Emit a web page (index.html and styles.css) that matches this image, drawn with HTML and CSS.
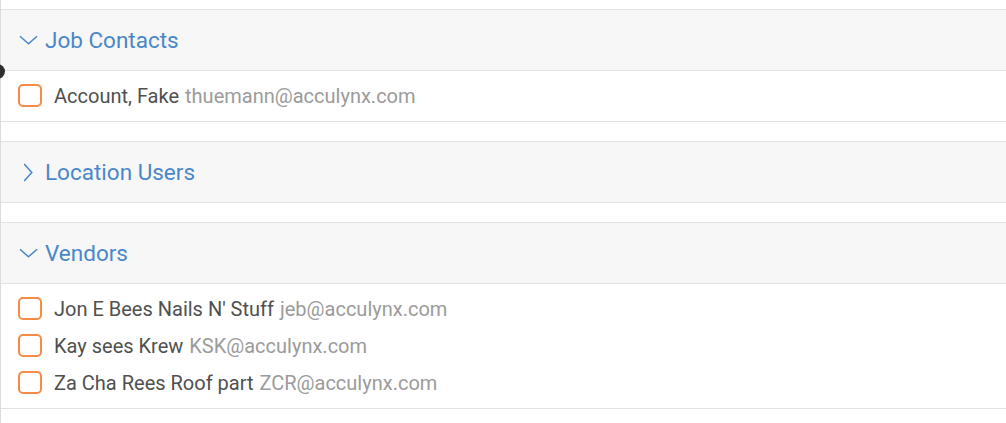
FILE: index.html
```html
<!DOCTYPE html>
<html lang="en">
<head>
    <meta charset="UTF-8">
    <title>Recipients</title>
    <link rel="stylesheet" href="styles.css">
</head>
<body>
    <div class="panel">
        <span class="handle"></span>

        <section class="group">
            <div class="group-header">
                <svg class="chevron" viewBox="0 0 20 10"><path d="M1 1 L10 9 L19 1"/></svg>
                <span class="group-title">Job Contacts</span>
            </div>
            <div class="group-body">
                <label class="contact">
                    <span class="check"></span>
                    <span class="contact-name">Account, Fake</span>
                    <span class="contact-email">thuemann@acculynx.com</span>
                </label>
            </div>
        </section>

        <section class="group">
            <div class="group-header">
                <svg class="chevron chevron-right" viewBox="0 0 10 20"><path d="M1 1 L9 10 L1 19"/></svg>
                <span class="group-title">Location Users</span>
            </div>
        </section>

        <section class="group">
            <div class="group-header">
                <svg class="chevron" viewBox="0 0 20 10"><path d="M1 1 L10 9 L19 1"/></svg>
                <span class="group-title">Vendors</span>
            </div>
            <div class="group-body">
                <label class="contact">
                    <span class="check"></span>
                    <span class="contact-name">Jon E Bees Nails N' Stuff</span>
                    <span class="contact-email">jeb@acculynx.com</span>
                </label>
                <label class="contact">
                    <span class="check"></span>
                    <span class="contact-name">Kay sees Krew</span>
                    <span class="contact-email">KSK@acculynx.com</span>
                </label>
                <label class="contact">
                    <span class="check"></span>
                    <span class="contact-name">Za Cha Rees Roof part</span>
                    <span class="contact-email">ZCR@acculynx.com</span>
                </label>
            </div>
        </section>
    </div>
</body>
</html>
```

FILE: styles.css
```css
* {
    margin: 0;
    padding: 0;
    box-sizing: border-box;
}

body {
    font-family: Roboto, 'Liberation Sans', Arial, sans-serif;
    background: white;
    min-height: 100vh;
    overflow: hidden;
}

.panel {
    position: relative;
    border-left: 1px solid #dcdcdc;
    min-height: 100vh;
    padding-top: 9px;
}

/* drag handle peeking in from the left edge */
.handle {
    position: absolute;
    left: -11px;
    top: 64px;
    width: 15px;
    height: 15px;
    border-radius: 50%;
    background: #2e2e2e;
}

.group {
    border-bottom: 1px solid #e2e2e2;
    margin-bottom: 19px;
}

.group-header {
    display: flex;
    align-items: center;
    height: 62px;
    padding-left: 18px;
    background: #f7f7f7;
    border-top: 1px solid #e2e2e2;
    border-bottom: 1px solid #e2e2e2;
}

.group:not(:has(.group-body)) .group-header {
    border-bottom: none;
    height: 61px;
}

.chevron {
    width: 19px;
    height: 10px;
    margin-right: 7px;
    fill: none;
    stroke: #4a87c9;
    stroke-width: 1.6;
}

.chevron-right {
    width: 10px;
    height: 19px;
    margin-left: 4px;
    margin-right: 12px;
}

.group-title {
    font-size: 22.5px;
    color: #4a87c9;
    margin-top: -1px;
}

.group-body {
    padding: 6px 0 7px 17px;
}

.contact {
    display: flex;
    align-items: center;
    height: 37px;
    font-size: 20px;
}

.check {
    width: 24px;
    height: 23px;
    border: 2px solid #f68b45;
    border-radius: 5px;
    margin-right: 12px;
}

.contact-name {
    color: #505050;
    margin-right: 6px;
}

.contact-email {
    color: #9b9b9b;
}
```
